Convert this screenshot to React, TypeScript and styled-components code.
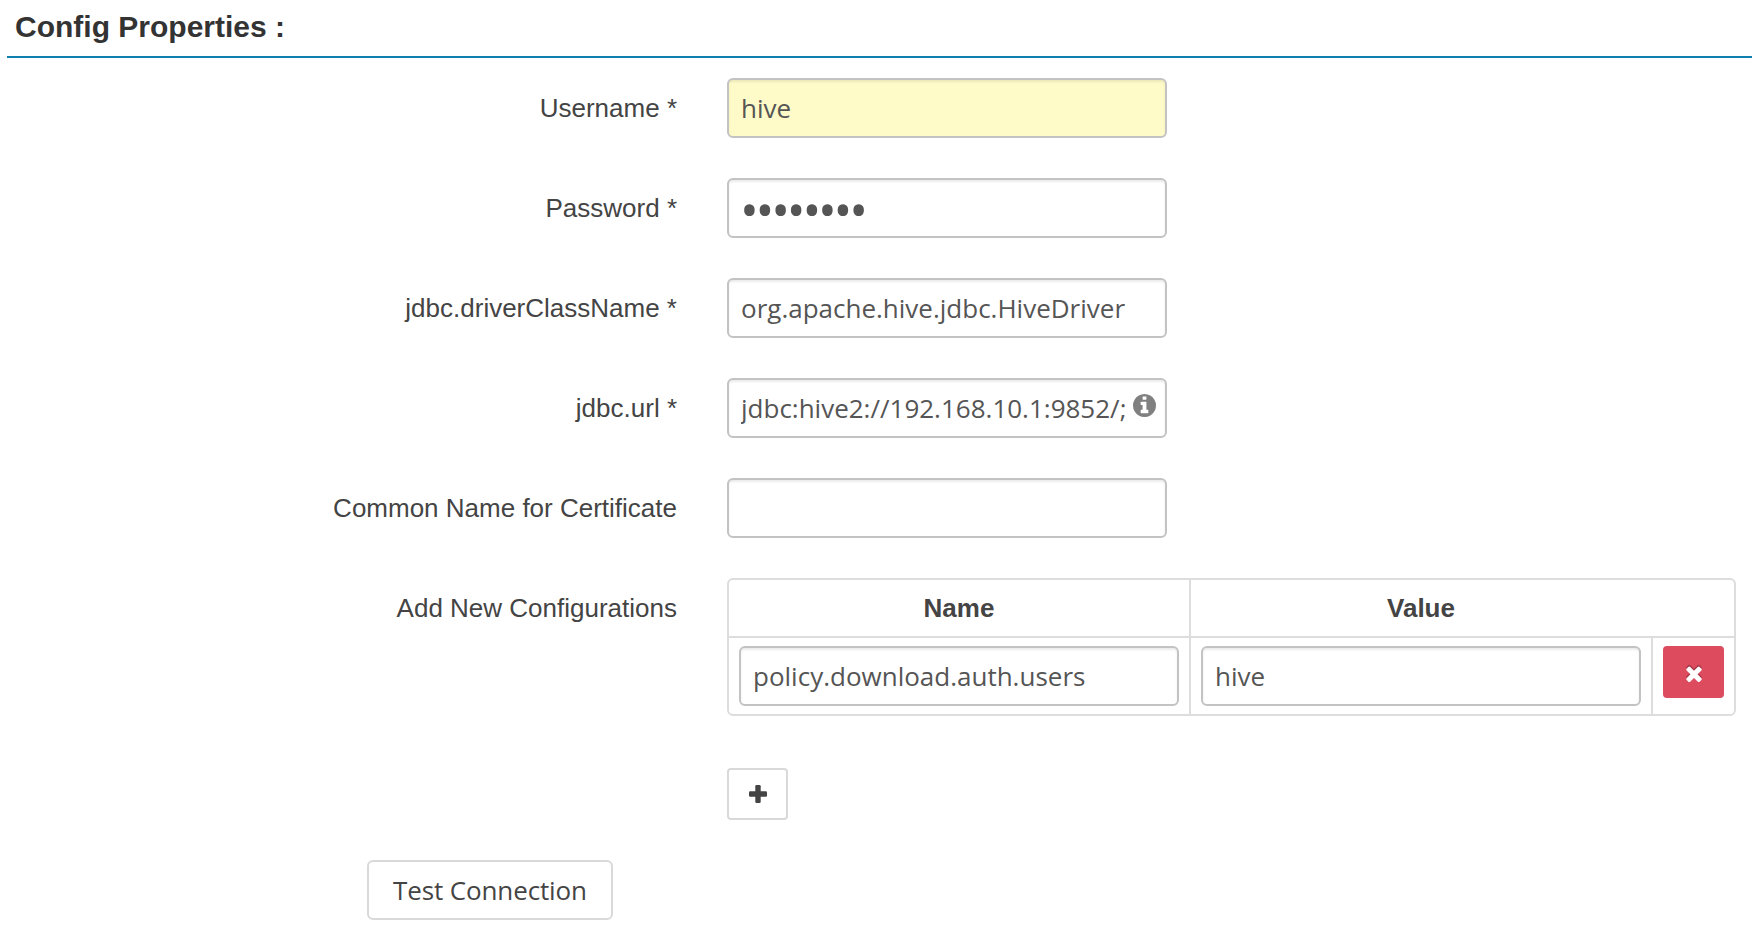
import React from "react";
import styled, { createGlobalStyle } from "styled-components";

const GlobalStyle = createGlobalStyle`
  *, *::before, *::after { box-sizing: border-box; }
  body {
    margin: 0;
    background: #fff;
    color: #444;
    font-family: "Liberation Sans", Arial, sans-serif;
    font-size: 26px;
    line-height: 40px;
    overflow: hidden;
  }
`;

const Page = styled.main`
  width: 1752px;
  height: 934px;
  padding-left: 7px;
`;

const Heading = styled.h1`
  margin: 0;
  height: 58px;
  padding: 7px 0 0 8px;
  border-bottom: 2px solid #0f7fad;
  color: #333;
  font-size: 30px;
  font-weight: bold;
  line-height: 40px;
`;

const Form = styled.form`
  padding-top: 20px;
`;

const Row = styled.div`
  display: flex;
  align-items: flex-start;
  gap: 50px;
  margin-bottom: 40px;
`;

const Label = styled.label`
  width: 670px;
  padding-top: 10px;
  text-align: right;
`;

const Field = styled.div`
  position: relative;
  width: 440px;
`;

const Input = styled.input<{ $filled?: boolean }>`
  display: block;
  width: 440px;
  height: 60px;
  padding: 0 12px;
  border: 2px solid #c3c3c3;
  border-radius: 6px;
  outline: 0;
  background: ${(p) => (p.$filled ? "#fffbc8" : "#fff")};
  box-shadow: inset 0 2px 2px rgba(0, 0, 0, 0.075);
  color: #555;
  font: 26px/40px "Open Sans", sans-serif;
  &[type="password"] {
    padding: 2px 11px 0;
    font-size: 50px;
    letter-spacing: -3.2px;
  }
`;

const InfoIcon = styled.svg`
  position: absolute;
  top: 16px;
  right: 11px;
  width: 23px;
  height: 23px;
  fill: #808080;
`;

const Table = styled.table`
  width: 1009px;
  table-layout: fixed;
  border: 2px solid #ddd;
  border-radius: 6px;
  border-collapse: separate;
  border-spacing: 0;
`;

const HeadCell = styled.th`
  height: 56px;
  padding: 0;
  font-weight: bold;
  & + & { border-left: 2px solid #ddd; }
`;

const Cell = styled.td`
  height: 78px;
  padding: 8px 10px;
  border-top: 2px solid #ddd;
  vertical-align: top;
  & + & { border-left: 2px solid #ddd; }
`;

const RemoveButton = styled.button`
  display: flex;
  align-items: center;
  justify-content: center;
  width: 61px;
  height: 52px;
  padding: 2px 0 0;
  border: 0;
  border-radius: 4px;
  background: #dd4b5f;
`;

const AddButton = styled.button`
  display: flex;
  align-items: center;
  justify-content: center;
  width: 61px;
  height: 52px;
  margin: 52px 0 0 720px;
  padding: 0;
  border: 2px solid #d9d9d9;
  border-radius: 4px;
  background: #fff;
`;

const TestButton = styled.button`
  display: block;
  width: 246px;
  height: 60px;
  margin: 40px 0 0 360px;
  padding: 0;
  border: 2px solid #d9d9d9;
  border-radius: 6px;
  background: #fff;
  color: #444;
  font: 26px/40px "Open Sans", sans-serif;
  letter-spacing: -0.13px;
`;

const ConfigTable = styled(Row)`
  margin-bottom: 0;
`;

const fields = [
  { label: "Username *", value: "hive", filled: true },
  { label: "Password *", value: "password", type: "password" },
  { label: "jdbc.driverClassName *", value: "org.apache.hive.jdbc.HiveDriver" },
  { label: "jdbc.url *", value: "jdbc:hive2://192.168.10.1:9852/;", info: true },
  { label: "Common Name for Certificate", value: "" },
];

const Info = () => (
  <InfoIcon viewBox="128 128 1536 1536">
    <path d="M1152 1376v-160q0-14-9-23t-23-9h-96v-512q0-14-9-23t-23-9h-320q-14 0-23 9t-9 23v160q0 14 9 23t23 9h96v320h-96q-14 0-23 9t-9 23v160q0 14 9 23t23 9h448q14 0 23-9t9-23zm-128-896v-160q0-14-9-23t-23-9h-192q-14 0-23 9t-9 23v160q0 14 9 23t23 9h192q14 0 23-9t9-23zm640 416q0 209-103 385.5t-279.5 279.5-385.5 103-385.5-103-279.5-279.5-103-385.5 103-385.5 279.5-279.5 385.5-103 385.5 103 279.5 279.5 103 385.5z" />
  </InfoIcon>
);

const crossPath =
  "M1490 1322q0 40-28 68l-136 136q-28 28-68 28t-68-28l-294-294-294 294q-28 28-68 28t-68-28l-136-136q-28-28-28-68t28-68l294-294-294-294q-28-28-28-68t28-68l136-136q28-28 68-28t68 28l294 294 294-294q28-28 68-28t68 28l136 136q28 28 28 68t-28 68l-294 294 294 294q28 28 28 68z";

const Cross = () => (
  <svg width="24" height="24" viewBox="-24 -2 1840 1840">
    <path d={crossPath} transform="translate(0 -90)" fill="#a83948" />
    <path d={crossPath} fill="#fff" transform="translate(0 60)" />
  </svg>
);

const Plus = () => (
  <svg width="18" height="18" viewBox="0 0 18 18" fill="#444">
    <rect x="0" y="6.3" width="18" height="5.4" rx="1.2" />
    <rect x="6.3" y="0" width="5.4" height="18" rx="1.2" />
  </svg>
);

export default function App() {
  return (
    <>
      <GlobalStyle />
      <Page>
        <Heading>Config Properties :</Heading>
        <Form>
          {fields.map((f) => (
            <Row key={f.label}>
              <Label>{f.label}</Label>
              <Field>
                <Input type={f.type ?? "text"} defaultValue={f.value} $filled={f.filled} />
                {f.info && <Info />}
              </Field>
            </Row>
          ))}
          <ConfigTable>
            <Label>Add New Configurations</Label>
            <Table>
              <colgroup>
                <col width="460" />
                <col width="462" />
                <col width="83" />
              </colgroup>
              <thead>
                <tr>
                  <HeadCell>Name</HeadCell>
                  <HeadCell>Value</HeadCell>
                  <th />
                </tr>
              </thead>
              <tbody>
                <tr>
                  <Cell><Input defaultValue="policy.download.auth.users" /></Cell>
                  <Cell><Input defaultValue="hive" /></Cell>
                  <Cell>
                    <RemoveButton type="button" aria-label="Remove"><Cross /></RemoveButton>
                  </Cell>
                </tr>
              </tbody>
            </Table>
          </ConfigTable>
          <AddButton type="button" aria-label="Add"><Plus /></AddButton>
          <TestButton type="button">Test Connection</TestButton>
        </Form>
      </Page>
    </>
  );
}
